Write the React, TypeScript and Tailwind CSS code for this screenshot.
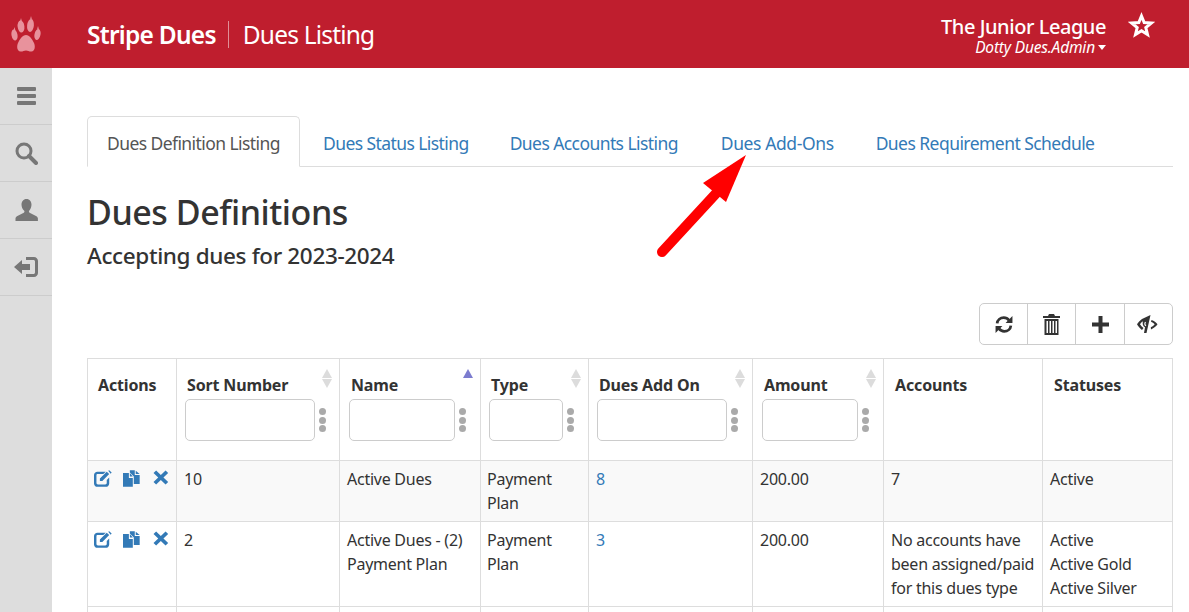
import React from 'react';

const FONT = 'font-["Noto_Sans","Open_Sans",sans-serif]';

// ── Glyph style icons ──
const Paw = () => (
  <svg width="30" height="36" viewBox="0 0 30 36" className="text-[#e8929c]" fill="currentColor">
    <ellipse cx="3.500" cy="19" rx="3" ry="5.500" transform="rotate(-10 3.500 19)" />
    <ellipse cx="10" cy="10.500" rx="3.400" ry="6" transform="rotate(-6 10 10.500)" />
    <ellipse cx="19.500" cy="9.500" rx="3.400" ry="6.500" transform="rotate(6 19.500 9.500)" />
    <ellipse cx="26.500" cy="18.500" rx="3" ry="5.500" transform="rotate(12 26.500 18.500)" />
    <path d="M15 19c3.500 0 6 4 8 8 1.500 3.500 1 8-2.500 8.500-2 .3-3.500-1-5.500-1s-3.500 1.300-5.500 1C6 35 5.500 30.500 7 27c2-4 4.500-8 8-8z" />
    <path d="M10 2l.8 3h-1.600zM20 0l.8 3h-1.600zM3.500 11l.8 3h-1.600zM27 10l.8 3h-1.600z" />
  </svg>
);

const IconList = () => (
  <svg width="19" height="18" viewBox="0 0 19 18" fill="currentColor">
    <rect y="0" width="19" height="4" rx="1" />
    <rect y="7" width="19" height="4" rx="1" />
    <rect y="14" width="19" height="4" rx="1" />
  </svg>
);

const IconSearch = () => (
  <svg width="23" height="23" viewBox="0 0 23 23" fill="none" stroke="currentColor">
    <circle cx="9" cy="9" r="7" strokeWidth="3" />
    <path d="M14 14l7 7" strokeWidth="4" strokeLinecap="round" />
  </svg>
);

const IconUser = () => (
  <svg width="23" height="22" viewBox="0 0 23 22" fill="currentColor">
    <path d="M11.500 0c3.200 0 5 2.500 5 5.500 0 2.500-1 5-2.300 6.300-.5.600-.3 1.500.4 1.900l6.400 3.300c1.200.6 1.900 1.600 1.900 2.500V22H.5v-2.500c0-.9.700-1.900 1.900-2.500l6.400-3.300c.7-.4.900-1.300.4-1.900C7.500 10.500 6.500 8 6.500 5.500c0-3 1.800-5.500 5-5.500z" />
  </svg>
);

const IconLogIn = () => (
  <svg width="24" height="20" viewBox="0 0 24 20" fill="currentColor">
    <path d="M0 10l8-7v4h8v6H8v4z" />
    <path d="M12 0h8c2.200 0 4 1.800 4 4v12c0 2.200-1.800 4-4 4h-8v-3h7.500c.8 0 1.500-.7 1.500-1.500v-11c0-.8-.7-1.500-1.500-1.500H12z" />
  </svg>
);

const IconEdit = () => (
  <svg width="18" height="17" viewBox="0 0 18 17" fill="#337ab7">
    <path d="M3.500 1.500H12L9.500 4H3.500C2.700 4 2.500 4.700 2.500 5.500v7.500c0 .8.700 1.500 1.500 1.500h7.500c.8 0 1.500-.7 1.500-1.500V10l2.500-2.500V13.500c0 1.900-1.600 3.500-3.500 3.500H3.500C1.600 17 0 15.400 0 13.500v-8.500C0 3.100 1.600 1.500 3.500 1.500z" />
    <path d="M6 8.500L13 1.500l2.500 2.500-7 7H6zM14.500 .5l1-.5 2.500 2.500-1 1.200z" />
  </svg>
);

const IconCopy = () => (
  <svg width="18" height="17" viewBox="0 0 18 17" fill="#337ab7">
    <path d="M0 3h6v5h4v9H0zM7 3l3 3.500H7z" />
    <path d="M7 0h5v5h5v9h-6V6.500L7 2.500zM13 .5l4 3.500h-4z" />
  </svg>
);

const IconRemove = () => (
  <svg width="16" height="15" viewBox="0 0 15 15" fill="#337ab7" preserveAspectRatio="none" className="ml-[2px]">
    <path d="M3 .5l4.500 4.500L12 .5 14.500 3 10 7.500l4.500 4.500-2.500 2.500L7.500 10 3 14.500.5 12 5 7.500.5 3z" />
  </svg>
);

const IconRefresh = () => (
  <svg width="18" height="19" viewBox="0 0 17 18" fill="none" stroke="#333">
    <path d="M2 8c.3-3.200 3-5.500 6.300-5.500 2.200 0 3.800 1 5 2.500" strokeWidth="2.600" />
    <path d="M15 10c-.3 3.200-3 5.500-6.300 5.500-2.200 0-3.800-1-5-2.500" strokeWidth="2.600" />
    <path d="M16.500 1v6.500H10zM.5 17v-6.500H7z" fill="#333" stroke="none" />
  </svg>
);

const IconTrash = () => (
  <svg width="17" height="21" viewBox="0 0 17 21" fill="#333">
    <path d="M6 0h5l1 2h5v2H0V2h5z" />
    <path d="M1.500 5h14v16h-14zM3.500 7v12h1.500V7zM6.500 7v12H8V7zM9.500 7v12H11V7zM12.500 7v12H14V7z" fillRule="evenodd" />
  </svg>
);

const IconPlus = () => (
  <svg width="17" height="17" viewBox="0 0 17 17" fill="#333">
    <path d="M6.500 0h4v6.500H17v4h-6.500V17h-4v-6.500H0v-4h6.500z" />
  </svg>
);

const IconEyeClose = () => (
  <svg width="21" height="18" viewBox="0 0 21 18" fill="#333" className="-ml-[2px]">
    <path d="M13.500 0L5 4C3 5.500 1 7.500 0 9.300c1 2.200 3 4.200 5 5.700l1.500-2C5 12 3.800 10.800 3 9.300 3.800 8 4.700 7 6 6.200c-.8 2.300-.2 4.800 2 6L7 18h2.500z" />
    <path d="M8.500 7C7.500 8.500 7.700 10 9 10.800" fill="none" stroke="#fff" strokeWidth="1.200" />
    <path d="M14.500 5c2.500 1 4.800 2.500 6 4.300-1.200 2.200-3.500 3.700-6.500 5.200l-.2-2.300c1.700-.7 3-1.700 3.900-2.900-.9-1.100-2.400-2-3.700-2.500z" />
  </svg>
);

const Arrow = () => (
  <svg width="100" height="110" viewBox="0 0 100 110" className="absolute left-[650px] top-[150px]">
    <path d="M12 102L72 37" stroke="#ff0000" strokeWidth="10" strokeLinecap="round" fill="none" />
    <path d="M53 33L96 5 76 52z" fill="#ff0000" />
  </svg>
);

// ── Table data ──
const COLS = [
  { label: 'Actions', width: 'w-[89px]', pad: 'pl-[10px]' },
  { label: 'Sort Number', width: 'w-[163px]', pad: 'pl-[10px]', filter: 'w-[130px]', sort: true },
  { label: 'Name', width: 'w-[141px]', pad: 'pl-[11px]', filter: 'w-[106px]', sort: true, active: true },
  { label: 'Type', width: 'w-[108px]', pad: 'pl-[10px]', filter: 'w-[74px]', sort: true },
  { label: 'Dues Add On', width: 'w-[164px]', pad: 'pl-[10px]', filter: 'w-[130px]', sort: true },
  { label: 'Amount', width: 'w-[131px]', pad: 'pl-[11px]', filter: 'w-[96px]', sort: true },
  { label: 'Accounts', width: 'w-[159px]', pad: 'pl-[11px]' },
  { label: 'Statuses', width: 'w-[130px]', pad: 'pl-[11px]' },
];

const ROWS = [
  {
    sort: '10', name: ['Active Dues'], type: ['Payment', 'Plan'], addOn: '8', amount: '200.00',
    accounts: ['7'], statuses: ['Active'], cls: 'bg-[#f9f9f9] h-[61px]',
  },
  {
    sort: '2', name: ['Active Dues - (2)', 'Payment Plan'], type: ['Payment', 'Plan'], addOn: '3', amount: '200.00',
    accounts: ['No accounts have', 'been assigned/paid', 'for this dues type'], statuses: ['Active', 'Active Gold', 'Active Silver'], cls: 'bg-white h-[85px]',
  },
];

const SIDE = [IconList, IconSearch, IconUser, IconLogIn];

const Lines = ({ items }: { items: string[] }) => (
  <>
    {items.map((t) => (
      <div key={t}>{t}</div>
    ))}
  </>
);

const HeaderCell = ({ col }: { col: (typeof COLS)[number] }) => (
  <th className={`${col.width} ${col.pad} relative border border-[#ddd] align-top pr-[10px] pt-[14px] text-left text-[16px] font-bold leading-[24px] text-[#333]`}>
    <div className="tracking-[-0.15px] whitespace-nowrap">{col.label}</div>
    {col.sort && (
      <div className="absolute right-[7px] top-[10px] flex flex-col gap-[1px]">
        <div className={`w-0 h-0 border-x-[5.500px] border-x-transparent border-b-[9px] ${col.active ? 'border-b-[#7c7ccf]' : 'border-b-[#dcdcdc]'}`} />
        {!col.active && <div className="w-0 h-0 border-x-[5.500px] border-x-transparent border-t-[9px] border-t-[#dcdcdc]" />}
      </div>
    )}
    {col.filter && (
      <div className="flex items-center gap-[3px] -ml-[2px] mt-[2px] mb-[19px]">
        <div className={`${col.filter} h-[42px] rounded-[5px] border border-[#ccc] bg-white`} />
        <div className="flex flex-col gap-[1.500px] pl-[1px]">
          <div className="w-[7px] h-[7px] rounded-full bg-[#aaa]" />
          <div className="w-[7px] h-[7px] rounded-full bg-[#aaa]" />
          <div className="w-[7px] h-[7px] rounded-full bg-[#aaa]" />
        </div>
      </div>
    )}
  </th>
);

const Cell = ({ children }: { children: React.ReactNode }) => (
  <td className="border border-[#ddd] align-top px-[7px] pt-[6px] text-[16px] leading-[24px] text-[#333] tracking-[-0.25px] whitespace-nowrap">
    {children}
  </td>
);

export default function App() {
  return (
    <div className={`${FONT} h-[612px] w-[1189px] overflow-hidden relative flex flex-col bg-white`}>
      {/* Top bar */}
      <header className="h-[68px] shrink-0 bg-[#bf1e2e] text-white flex items-center">
        <div className="w-[52px] flex justify-center -mt-[1px]">
          <Paw />
        </div>
        <div className="ml-[35px] text-[24.500px] font-semibold tracking-[-0.75px] pr-[12px] border-r border-[#e08f97] leading-[27px]">Stripe Dues</div>
        <div className="ml-[14px] text-[24.500px] tracking-[-0.8px] leading-[27px]">Dues Listing</div>
        <div className="ml-auto text-right mr-[83px] mt-[2px]">
          <div className="text-[20px] font-medium leading-[23px] tracking-[-0.45px] whitespace-nowrap">The Junior League</div>
          <div className="text-[15.500px] italic leading-[18px] tracking-[-0.17px] flex items-center justify-end gap-[3px] whitespace-nowrap">
            Dotty Dues.Admin
            <span className="w-0 h-0 border-x-[4.500px] border-x-transparent border-t-[5px] border-t-white mt-[2px]" />
          </div>
        </div>
        <div className="absolute left-[1128px] top-[12px]">
          <svg width="27" height="27" viewBox="0 0 27 27" fill="none" stroke="#fff" strokeWidth="3">
            <path d="M13.500 4l2.700 6.600 7 .5-5.400 4.500 1.700 6.900-6-3.800-6 3.800 1.700-6.900L3.800 11.100l7-.5z" />
          </svg>
        </div>
      </header>

      <div className="flex flex-1 min-h-0">
        {/* Side nav */}
        <nav className="w-[52px] shrink-0 bg-[#ddd] text-[#777]">
          {SIDE.map((Icon, i) => (
            <div key={i} className="h-[57px] border-b border-[#ccc] flex items-center justify-center">
              <Icon />
            </div>
          ))}
        </nav>

        {/* Main content */}
        <main className="flex-1 min-w-0 pl-[35px] pr-[16px] pt-[48px]">
          <ul className="flex border-b border-[#ddd] h-[51px] text-[17.500px] tracking-[-0.58px] whitespace-nowrap">
            <li className="h-[51px] px-[19px] pt-[13px] border border-[#ddd] border-b-white rounded-t-[5px] bg-white text-[#555] w-[213px]">
              Dues Definition Listing
            </li>
            <li className="pt-[14px] text-[#337ab7] ml-[23px]">Dues Status Listing</li>
            <li className="pt-[14px] text-[#337ab7] ml-[41px]">Dues Accounts Listing</li>
            <li className="pt-[14px] text-[#337ab7] ml-[43px] tracking-[-0.4px]">Dues Add-Ons</li>
            <li className="pt-[14px] text-[#337ab7] ml-[42px] tracking-[-0.55px]">Dues Requirement Schedule</li>
          </ul>

          <h1 className="mt-[20px] text-[34px] font-medium leading-[50px] tracking-[-0.45px] text-[#333]">Dues Definitions</h1>
          <h2 className="mt-[2px] text-[22.500px] font-medium leading-[34px] tracking-[-0.36px] text-[#333]">Accepting dues for 2023-2024</h2>

          <div className="flex justify-end mt-[30px]">
            <div className="flex h-[42px] rounded-[5px] border border-[#ccc] bg-white divide-x divide-[#ccc]">
              <div className="w-[48px] flex items-center justify-center"><IconRefresh /></div>
              <div className="w-[48px] flex items-center justify-center"><IconTrash /></div>
              <div className="w-[49px] flex items-center justify-center"><IconPlus /></div>
              <div className="w-[47px] flex items-center justify-center"><IconEyeClose /></div>
            </div>
          </div>

          <table className="mt-[13px] w-[1086px] table-fixed border-collapse">
            <thead>
              <tr className="h-[102px]">
                {COLS.map((c) => (
                  <HeaderCell key={c.label} col={c} />
                ))}
              </tr>
            </thead>
            <tbody>
              {ROWS.map((r) => (
                <tr key={r.sort} className={r.cls}>
                  <Cell>
                    <div className="flex gap-[11px] pt-[3px] -ml-[1px]">
                      <IconEdit />
                      <IconCopy />
                      <IconRemove />
                    </div>
                  </Cell>
                  <Cell>{r.sort}</Cell>
                  <Cell><Lines items={r.name} /></Cell>
                  <Cell><div className="-ml-[1px]"><Lines items={r.type} /></div></Cell>
                  <Cell><span className="text-[#337ab7]">{r.addOn}</span></Cell>
                  <Cell>{r.amount}</Cell>
                  <Cell><Lines items={r.accounts} /></Cell>
                  <Cell><Lines items={r.statuses} /></Cell>
                </tr>
              ))}
              <tr className="h-[40px]">
                {COLS.map((c) => (
                  <td key={c.label} className="border border-[#ddd]" />
                ))}
              </tr>
            </tbody>
          </table>
        </main>
      </div>

      <Arrow />
    </div>
  );
}
